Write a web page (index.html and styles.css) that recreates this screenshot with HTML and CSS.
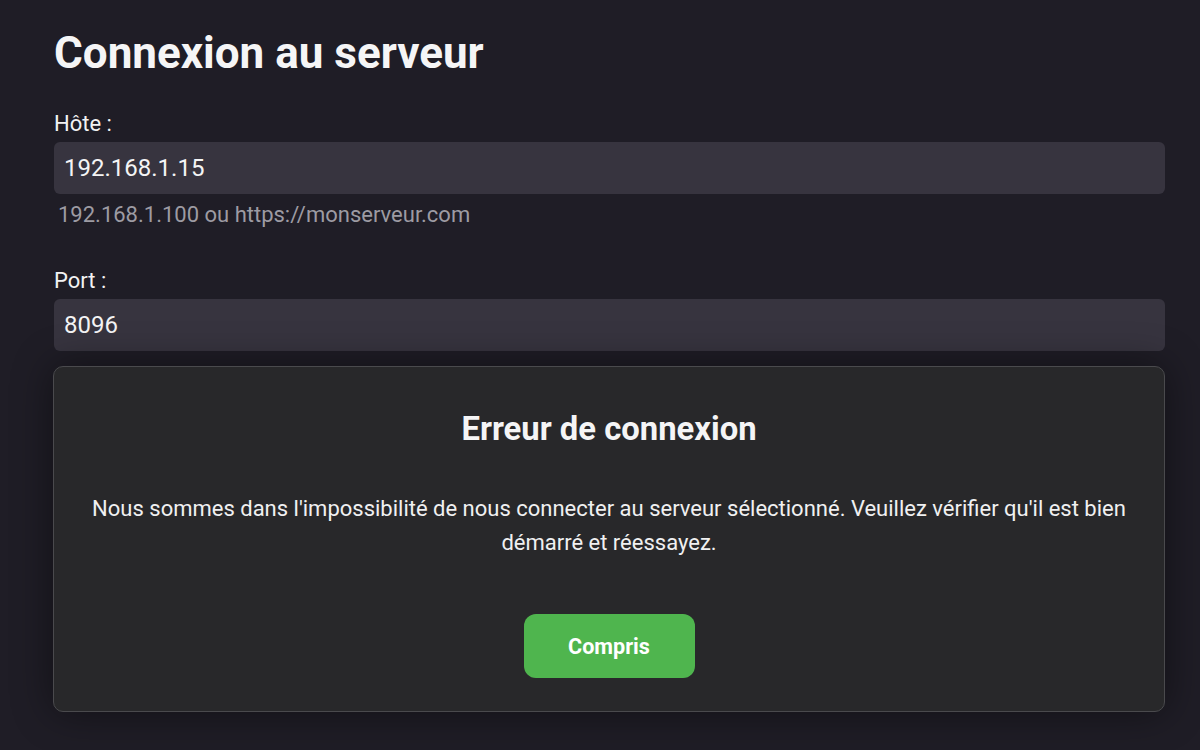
FILE: index.html
```html
<!DOCTYPE html>
<html lang="fr">
<head>
<meta charset="utf-8">
<title>Connexion au serveur</title>
<link rel="stylesheet" href="styles.css">
</head>
<body>
<main class="page">
  <h1 class="title">Connexion au serveur</h1>
  <div class="field">
    <label class="label" for="host">Hôte :</label>
    <input class="input" id="host" type="text" value="192.168.1.15">
    <div class="hint">192.168.1.100 ou https://monserveur.com</div>
  </div>
  <div class="field">
    <label class="label" for="port">Port :</label>
    <input class="input" id="port" type="text" value="8096">
  </div>
  <section class="dialog">
    <h2 class="dialog-title">Erreur de connexion</h2>
    <p class="dialog-text">Nous sommes dans l'impossibilité de nous connecter au serveur sélectionné. Veuillez vérifier qu'il est bien démarré et réessayez.</p>
    <button class="btn" type="button">Compris</button>
  </section>
</main>
</body>
</html>
```

FILE: styles.css
```css
html, body {
  margin: 0;
  height: 100%;
  background: #1f1d26;
  overflow: hidden;
}
body {
  font-family: Roboto, "Liberation Sans", sans-serif;
  color: #f4f4f5;
}
.page {
  padding: 29px 35px 0 54px;
  display: flex;
  flex-direction: column;
}
.title {
  margin: 0 0 36px;
  font-size: 44px;
  line-height: 48px;
  font-weight: 700;
  color: #f5f5f6;
}
.field {
  display: flex;
  flex-direction: column;
}
.field + .field {
  margin-top: 44px;
}
.label {
  font-size: 22px;
  line-height: 22px;
  margin-bottom: 7px;
  color: #f2f2f3;
}
.input {
  height: 52px;
  box-sizing: border-box;
  border: none;
  border-radius: 6px;
  background: #37343f;
  color: #f4f4f5;
  font-family: Roboto, "Liberation Sans", sans-serif;
  font-size: 24px;
  padding: 0 10px;
  outline: none;
}
.hint {
  margin-top: 10px;
  padding-left: 4px;
  font-size: 22px;
  line-height: 22px;
  color: #9d9ba3;
}
.dialog {
  margin-top: 15px;
  margin-left: -1px;
  height: 346px;
  box-sizing: border-box;
  background: #28282a;
  border: 1px solid #4a4a4d;
  border-radius: 10px;
  box-shadow: 0 0 40px rgba(0, 0, 0, 0.45);
  padding: 44px 36px 33px;
  display: flex;
  flex-direction: column;
  align-items: center;
  text-align: center;
}
.dialog-title {
  margin: 0;
  font-size: 32.8px;
  line-height: 36px;
  font-weight: 700;
  color: #f5f5f6;
}
.dialog-text {
  margin: 45px 0 0;
  font-size: 22px;
  line-height: 34px;
  color: #f0f0f1;
}
.btn {
  margin-top: 54px;
  width: 171px;
  height: 64px;
  border: none;
  border-radius: 12px;
  background: #4fb54e;
  color: #ffffff;
  font-family: Roboto, "Liberation Sans", sans-serif;
  font-size: 21.6px;
  font-weight: 700;
  cursor: pointer;
}
```
